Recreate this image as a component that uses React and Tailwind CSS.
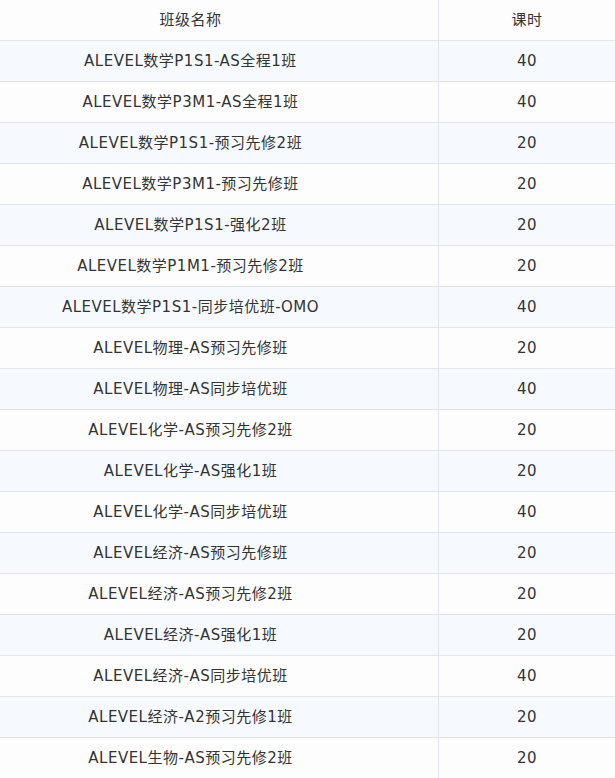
const rows = [
  ['ALEVEL数学P1S1-AS全程1班', 40],
  ['ALEVEL数学P3M1-AS全程1班', 40],
  ['ALEVEL数学P1S1-预习先修2班', 20],
  ['ALEVEL数学P3M1-预习先修班', 20],
  ['ALEVEL数学P1S1-强化2班', 20],
  ['ALEVEL数学P1M1-预习先修2班', 20],
  ['ALEVEL数学P1S1-同步培优班-OMO', 40],
  ['ALEVEL物理-AS预习先修班', 20],
  ['ALEVEL物理-AS同步培优班', 40],
  ['ALEVEL化学-AS预习先修2班', 20],
  ['ALEVEL化学-AS强化1班', 20],
  ['ALEVEL化学-AS同步培优班', 40],
  ['ALEVEL经济-AS预习先修班', 20],
  ['ALEVEL经济-AS预习先修2班', 20],
  ['ALEVEL经济-AS强化1班', 20],
  ['ALEVEL经济-AS同步培优班', 40],
  ['ALEVEL经济-A2预习先修1班', 20],
  ['ALEVEL生物-AS预习先修2班', 20],
]

export default function App() {
  return (
    <div
      className="w-[615px] h-[778px] overflow-hidden bg-[#fdfdfd] text-[#333] text-[15px] tracking-[0.5px]"
      style={{ fontFamily: '"DejaVu Sans", "Noto Sans CJK SC", sans-serif' }}
    >
      <div className="grid grid-cols-[439px_176px] h-[41px] border-b border-[#e1e4ea]">
        <div className="flex items-center justify-center pr-[57px] border-r border-[#e1e4ea]">班级名称</div>
        <div className="flex items-center justify-center">课时</div>
      </div>
      {rows.map(([name, hours], i) => (
        <div
          key={i}
          className={
            'grid grid-cols-[439px_176px] h-[41px] border-b border-[#e1e4ea] ' +
            (i % 2 === 0 ? 'bg-[#f6faff]' : 'bg-[#fdfdfd]')
          }
        >
          <div className="flex items-center justify-center pr-[57px] border-r border-[#e1e4ea]">{name}</div>
          <div className="flex items-center justify-center">{hours}</div>
        </div>
      ))}
    </div>
  )
}
